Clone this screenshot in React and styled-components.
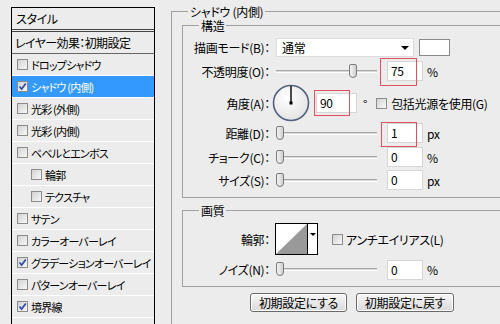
import React from "react";
import styled, { createGlobalStyle } from "styled-components";

const GlobalStyle = createGlobalStyle`
  html, body { margin: 0; padding: 0; background: #ececec; }
  body {
    width: 500px;
    height: 324px;
    overflow: hidden;
    font-family: "Noto Sans CJK JP", "Noto Sans", sans-serif;
    font-size: 12px;
    letter-spacing: -0.3px;
    color: #000;
    font-feature-settings: "palt";
  }
`;

const Page = styled.div`
  display: flex;
  align-items: flex-start;
  width: 500px;
  height: 324px;
  overflow: hidden;
`;

/* ---------- left list ---------- */

const StylePanel = styled.div`
  margin: 7px 0 0 11px;
  width: 144px;
  height: 317px;
  flex-shrink: 0;
  box-sizing: border-box;
  border: 1px solid #000;
  border-bottom: none;
  overflow: hidden;
`;

const PanelHeader = styled.div`
  height: 21px;
  line-height: 21px;
  padding-left: 4px;
  border-bottom: 3px double #444;
`;

const PresetRow = styled.div`
  height: 21px;
  line-height: 21px;
  padding-left: 3px;
  border-bottom: 1px solid #666;
  letter-spacing: -0.6px;
`;

const Item = styled.div`
  display: flex;
  align-items: center;
  height: 21px;
  padding-left: ${(p) => (p.$indent ? 19 : 5)}px;
  border-bottom: 1px solid #fff;
  background: ${(p) => (p.$active ? "#3399ff" : "transparent")};
  color: ${(p) => (p.$active ? "#fff" : "#000")};
  font-size: 11px;
  letter-spacing: -0.8px;
  white-space: nowrap;
`;

const Box = styled.span`
  display: inline-flex;
  align-items: center;
  justify-content: center;
  width: 11px;
  height: 11px;
  box-sizing: border-box;
  border: 1px solid #8c8c8c;
  background: linear-gradient(135deg, #d2d2d2, #f8f8f8);
  margin-right: ${(p) => p.$gap ?? 3}px;
  margin-left: ${(p) => p.$left ?? 0}px;
  flex-shrink: 0;
`;

const Check = ({ on, gap, left }) => (
  <Box $gap={gap} $left={left}>
    {on && (
      <svg width="9" height="9" viewBox="0 0 9 9">
        <path d="M1.5 4.5 L3.6 7 L7.8 1.5" fill="none" stroke="#2f4fa8" strokeWidth="1.8" />
      </svg>
    )}
  </Box>
);

const items = [
  { t: "ドロップシャドウ" },
  { t: "シャドウ (内側)", on: true, active: true },
  { t: "光彩 (外側)" },
  { t: "光彩 (内側)" },
  { t: "ベベルとエンボス" },
  { t: "輪郭", indent: true },
  { t: "テクスチャ", indent: true },
  { t: "サテン" },
  { t: "カラーオーバーレイ" },
  { t: "グラデーションオーバーレイ", on: true },
  { t: "パターンオーバーレイ" },
  { t: "境界線", on: true },
];

/* ---------- right side ---------- */

const OuterGroup = styled.div`
  position: relative;
  margin: 11px 0 0 16px;
  width: 362px;
  height: 330px;
  flex-shrink: 0;
  box-sizing: border-box;
  border: 1px solid #a0a0a0;
  padding: 13px 10px 0 10px;
`;

const Group = styled.div`
  position: relative;
  box-sizing: border-box;
  height: ${(p) => p.$h}px;
  margin-top: ${(p) => p.$mt || 0}px;
  border: 1px solid #a0a0a0;
  padding-top: 12px;
`;

const Legend = styled.span`
  position: absolute;
  top: -7px;
  left: 16px;
  padding: 0 2px;
  line-height: 13px;
  background: #ececec;
  white-space: nowrap;
`;

const Row = styled.div`
  display: flex;
  align-items: center;
  height: ${(p) => p.$h}px;
  margin-top: ${(p) => p.$mt || 0}px;
`;

const Label = styled.span`
  width: 87px;
  flex-shrink: 0;
  text-align: right;
  white-space: nowrap;
  margin-right: 6px;
`;

const Select = styled.div`
  position: relative;
  width: 138px;
  height: 19px;
  box-sizing: border-box;
  background: #fff;
  border: 1px solid #dcdcdc;
  padding-left: 5px;
  line-height: 17px;
  &::after {
    content: "";
    position: absolute;
    right: 4px;
    top: 7px;
    border-left: 4px solid transparent;
    border-right: 4px solid transparent;
    border-top: 4px solid #000;
  }
`;

const Swatch = styled.div`
  margin-left: 5px;
  width: 31px;
  height: 17px;
  box-sizing: border-box;
  border: 1px solid #8a8a8a;
  background: #fff;
`;

const Track = styled.div`
  position: relative;
  width: 101px;
  height: 3px;
  box-sizing: border-box;
  background: #d8d8d8;
  border-top: 1px solid #a8a8a8;
  border-bottom: 1px solid #fff;
  flex-shrink: 0;
`;

const Thumb = styled.span`
  position: absolute;
  top: -7px;
  left: ${(p) => p.$at}px;
  width: 8px;
  height: 14px;
  box-sizing: border-box;
  border: 1px solid #7a7a7a;
  border-radius: 2px 2px 4px 4px;
  background: linear-gradient(90deg, #f4f4f4, #d0d0d0);
`;

const InputWrap = styled.div`
  position: relative;
  margin-left: ${(p) => p.$ml ?? 10}px;
`;

const Input = styled.div`
  width: ${(p) => p.$w || 36}px;
  height: 20px;
  box-sizing: border-box;
  background: #fff;
  border: 1px solid #d6d6d6;
  padding-left: 3px;
  line-height: 18px;
`;

const Highlight = styled.span`
  position: absolute;
  left: ${(p) => p.$x}px;
  top: ${(p) => p.$y}px;
  width: ${(p) => p.$w}px;
  height: ${(p) => p.$h}px;
  box-sizing: border-box;
  border: 1px solid #e0505e;
  pointer-events: none;
`;

const Unit = styled.span`
  margin-left: ${(p) => p.$ml ?? 4}px;
`;

const Dial = styled.svg`
  margin-left: -4px;
  flex-shrink: 0;
`;

const Contour = styled.div`
  display: flex;
  margin-left: -1px;
  width: 43px;
  height: 32px;
  box-sizing: border-box;
  border: 1px solid #000;
  background: #fff;
`;

const ContourDrop = styled.div`
  position: relative;
  flex: 1;
  border-left: 1px solid #000;
  &::after {
    content: "";
    position: absolute;
    left: 2px;
    top: 9px;
    border-left: 3px solid transparent;
    border-right: 3px solid transparent;
    border-top: 3px solid #000;
  }
`;

const Buttons = styled.div`
  display: flex;
  justify-content: center;
  gap: 9px;
  margin-top: 6px;
`;

const Button = styled.button`
  width: ${(p) => p.$w}px;
  height: 19px;
  padding: 0;
  font: inherit;
  letter-spacing: -0.3px;
  color: #000;
  border: 1px solid #6a6a6a;
  border-radius: 3px;
  background: linear-gradient(#f7f7f7, #dadada);
  box-shadow: inset 0 0 0 1px #fff;
  line-height: 16px;
`;

const Slider = ({ at = 0 }) => (
  <Track>
    <Thumb $at={at} />
  </Track>
);

export default function App() {
  return (
    <Page>
      <GlobalStyle />
      <StylePanel>
        <PanelHeader>スタイル</PanelHeader>
        <PresetRow>レイヤー効果：初期設定</PresetRow>
        {items.map((it) => (
          <Item key={it.t} $indent={it.indent} $active={it.active}>
            <Check on={it.on} />
            {it.t}
          </Item>
        ))}
      </StylePanel>

      <OuterGroup>
        <Legend>シャドウ (内側)</Legend>

        <Group $h={173}>
          <Legend>構造</Legend>
          <Row $h={19}>
            <Label>描画モード(B)：</Label>
            <Select>通常</Select>
            <Swatch />
          </Row>
          <Row $h={20} $mt={4}>
            <Label>不透明度(O)：</Label>
            <Slider at={73} />
            <InputWrap>
              <Input>75</Input>
              <Highlight $x={-7} $y={-3} $w={37} $h={28} />
            </InputWrap>
            <Unit>%</Unit>
          </Row>
          <Row $h={38} $mt={3}>
            <Label>角度(A)：</Label>
            <Dial width="38" height="38" viewBox="0 0 38 38">
              <defs>
                <radialGradient id="dialFill" cx="40%" cy="35%" r="70%">
                  <stop offset="0%" stopColor="#ffffff" />
                  <stop offset="100%" stopColor="#e2e2e2" />
                </radialGradient>
              </defs>
              <circle cx="19" cy="19" r="17.5" fill="url(#dialFill)" stroke="#54627f" strokeWidth="1.6" />
              <line x1="19" y1="2" x2="19" y2="19" stroke="#000" strokeWidth="1.4" />
              <rect x="17.5" y="17.5" width="3" height="3" fill="#000" />
            </Dial>
            <InputWrap $ml={6}>
              <Input $w={41}>90</Input>
              <Highlight $x={-2} $y={-3} $w={36} $h={26} />
            </InputWrap>
            <Unit $ml={6}>°</Unit>
            <Check gap={4} left={9} />
            <span>包括光源を使用(G)</span>
          </Row>
          <Row $h={20} $mt={1}>
            <Label>距離(D)：</Label>
            <Slider />
            <InputWrap>
              <Input>1</Input>
              <Highlight $x={-6} $y={-1} $w={36} $h={25} />
            </InputWrap>
            <Unit>px</Unit>
          </Row>
          <Row $h={20} $mt={4}>
            <Label>チョーク(C)：</Label>
            <Slider />
            <InputWrap>
              <Input>0</Input>
            </InputWrap>
            <Unit>%</Unit>
          </Row>
          <Row $h={20} $mt={3}>
            <Label>サイズ(S)：</Label>
            <Slider />
            <InputWrap>
              <Input>0</Input>
            </InputWrap>
            <Unit>px</Unit>
          </Row>
        </Group>

        <Group $h={77} $mt={12}>
          <Legend>画質</Legend>
          <Row $h={32}>
            <Label>輪郭：</Label>
            <Contour>
              <svg width="31" height="30" viewBox="0 0 31 30">
                <polygon points="0,30 31,0 31,30" fill="#999" />
              </svg>
              <ContourDrop />
            </Contour>
            <Check gap={3} left={14} />
            <span>アンチエイリアス(L)</span>
          </Row>
          <Row $h={19} $mt={5}>
            <Label>ノイズ(N)：</Label>
            <Slider />
            <InputWrap>
              <Input>0</Input>
            </InputWrap>
            <Unit>%</Unit>
          </Row>
        </Group>

        <Buttons>
          <Button $w={97}>初期設定にする</Button>
          <Button $w={98}>初期設定に戻す</Button>
        </Buttons>
      </OuterGroup>
    </Page>
  );
}
